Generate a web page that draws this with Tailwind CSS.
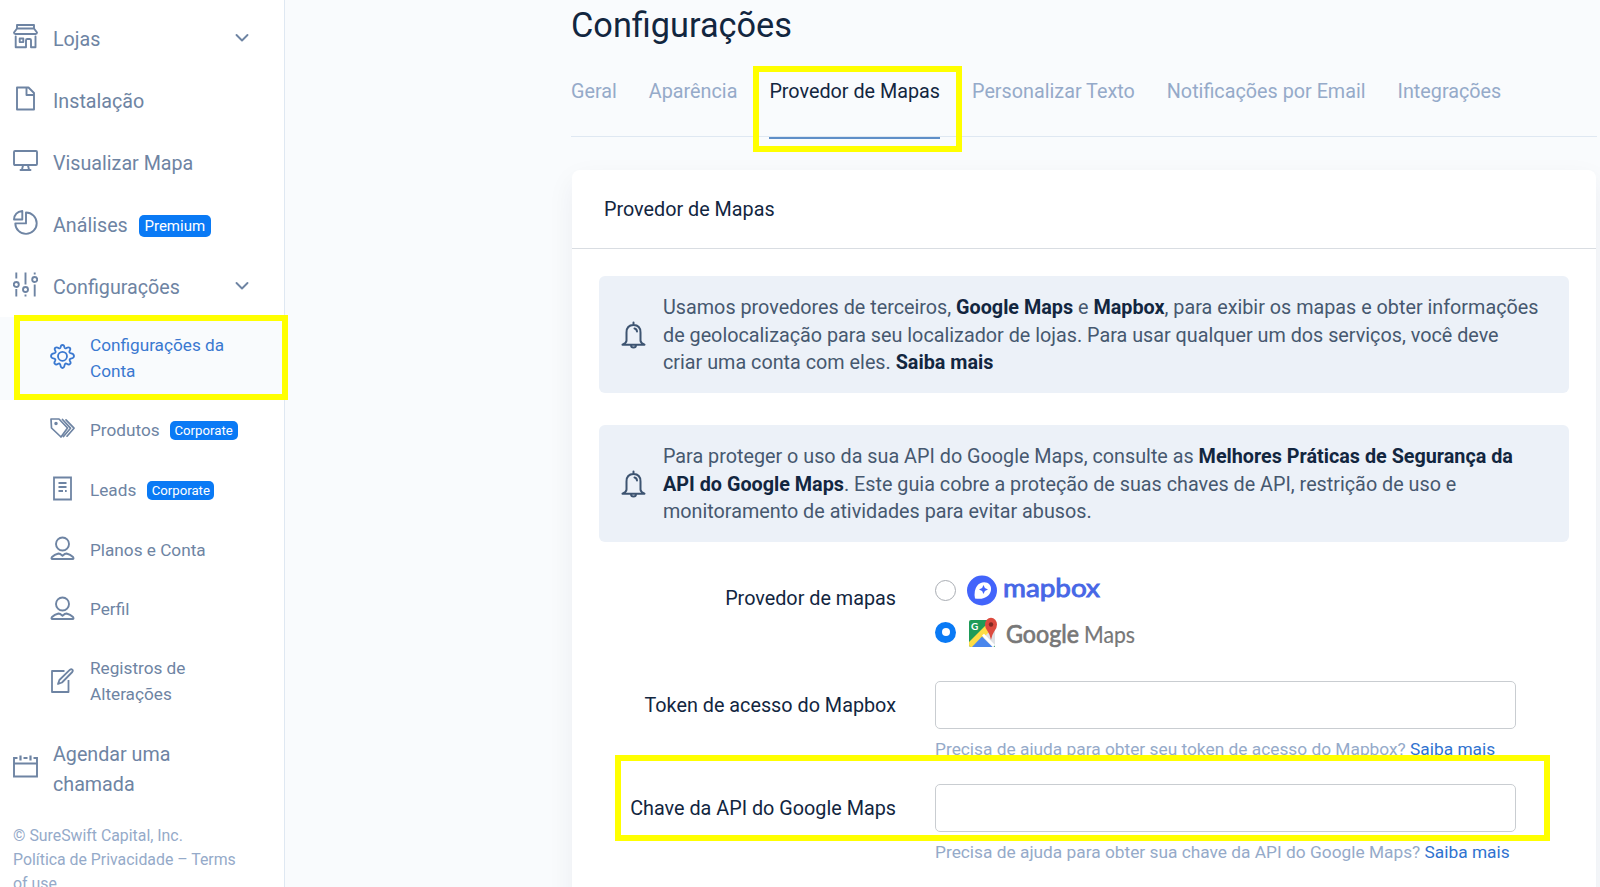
<!DOCTYPE html>
<html lang="pt-BR">
<head>
    <meta charset="UTF-8">
    <meta name="viewport" content="width=device-width, initial-scale=1.0">
    <title>Configurações</title>
    <script src="https://cdn.jsdelivr.net/npm/@tailwindcss/browser@4"></script>
</head>
<body class="relative flex h-screen overflow-hidden bg-[#f9fbfd] font-['Roboto',sans-serif] text-[#12263f]">

    <!-- Sidebar -->
    <aside class="w-[285px] shrink-0 border-r border-[#dfe8f2] bg-white pt-[7.5px] text-[19.7px] leading-[30px] text-[#6e84a3]">
        <nav>
            <a class="flex h-[61.9px] items-center pl-[13px]">
                <svg class="mr-[15px] mb-[4px] size-[25px]" viewBox="0 0 25 25" fill="none" stroke="currentColor" stroke-width="1.9" stroke-linejoin="round" stroke-linecap="round"><path d="M4 1h17v3.5H4zM4 4.500L1 8.500q0 1.500 1.500 1.500h20q1.500 0 1.500-1.500L21 4.500M2.700 12.500v10.700H13v-7q0-1.200 1.200-1.200h2.600q1.200 0 1.200 1.200v7h4.500V12.500M6.700 14.500h3.600v3.600H6.700z"/></svg>
                <span class="pt-[3px]">Lojas</span>
                <svg class="ml-auto mr-[35px] size-[14px]" viewBox="0 0 14 14" fill="none" stroke="currentColor" stroke-width="1.9" stroke-linecap="round" stroke-linejoin="round"><path d="M1.500 4l5.500 5.500L12.500 4"/></svg>
            </a>
            <a class="flex h-[61.9px] items-center pl-[13px]">
                <svg class="mr-[15px] mb-[4px] size-[25px]" viewBox="0 0 25 25" fill="none" stroke="currentColor" stroke-width="1.9" stroke-linejoin="round"><path d="M4 1.500h11.500l5.500 5.500v16.500H4zM13.500 1.500v7.500H21"/></svg>
                <span class="pt-[3px]">Instalação</span>
            </a>
            <a class="flex h-[61.9px] items-center pl-[13px]">
                <svg class="mr-[15px] mb-[4px] size-[25px]" viewBox="0 0 25 25" fill="none" stroke="currentColor" stroke-width="1.9" stroke-linejoin="round" stroke-linecap="round"><path d="M2 3h21q1 0 1 1v12q0 1-1 1H2q-1 0-1-1V4q0-1 1-1zM10 17.500L9 21.500M15 17.500l1 4M7.500 22h10"/></svg>
                <span class="pt-[3px]">Visualizar Mapa</span>
            </a>
            <a class="flex h-[61.9px] items-center pl-[13px]">
                <svg class="mr-[15px] mb-[4px] size-[25px]" viewBox="0 0 25 25" fill="none" stroke="currentColor" stroke-width="1.9" stroke-linejoin="round"><path d="M13 2.500a10.700 10.700 0 1 1-10.700 10.900H13zM9.300 1v8.500H1Q1.500 2 9.300 1z"/></svg>
                <span class="pt-[3px]">Análises</span>
                <span class="mt-[3px] ml-[11px] h-[22px] w-[72px] rounded-[5px] bg-[#0a7af5] text-center text-[15px] leading-[22px] text-white">Premium</span>
            </a>
            <a class="flex h-[61.9px] items-center pl-[13px]">
                <svg class="mr-[15px] mb-[4px] size-[25px]" viewBox="0 0 25 25" fill="none" stroke="currentColor" stroke-width="1.9"><path d="M3.300.5v6M3.300 17v7.500M12.500.5v12M12.500 22.500v2M21.700.5v2M21.700 12.500v12"/><circle cx="3.300" cy="12.500" r="2.500"/><circle cx="12.500" cy="17.500" r="2.500"/><circle cx="21.700" cy="7.500" r="2.500"/></svg>
                <span class="pt-[3px]">Configurações</span>
                <svg class="ml-auto mr-[35px] size-[14px]" viewBox="0 0 14 14" fill="none" stroke="currentColor" stroke-width="1.9" stroke-linecap="round" stroke-linejoin="round"><path d="M1.500 4l5.500 5.500L12.500 4"/></svg>
            </a>

            <!-- Submenu -->
            <div class="flex flex-col gap-[2.400px] text-[17.2px] leading-[25.700px]">
                <a class="flex h-[83px] items-center bg-[#f9fbfd] pl-[50px] text-[#3a78d0]">
                    <svg class="mr-[15px] mb-[4px] size-[25px] shrink-0" viewBox="0 0 25 25" fill="none" stroke="currentColor" stroke-width="1.8" stroke-linejoin="round"><path d="M10.600 3.200q.3-2.200 1.900-2.200t1.900 2.200q.4 1.600 2 .9q2-1.400 3.300-.3t-.1 3.200q-.8 1.400.8 2.100q3.600.7 3.600 2.900t-3.200 2.600q-1.700.6-1 2.100q1.500 2 .3 3.200t-3.300-.2q-1.600-.7-2.100 1q-.4 3.300-2.200 3.300t-2.200-3.300q-.5-1.700-2.100-1q-2.100 1.400-3.300.2t.3-3.200q.7-1.500-1-2.100Q1 14.200 1 12t3.600-2.900q1.600-.7.8-2.100q-1.400-2.100-.1-3.200t3.300.3q1.600.7 2-.9z"/><circle cx="12.500" cy="12.300" r="4.500"/></svg>
                    <span class="w-[150px] pt-px">Configurações da Conta</span>
                </a>
                <a class="flex h-[57.300px] items-center pl-[50px]">
                    <svg class="mr-[15px] mb-[4px] size-[25px]" viewBox="0 0 25 25" fill="none" stroke="currentColor" stroke-width="1.700" stroke-linejoin="round" stroke-linecap="round"><path d="M1 3h8l8.500 9-6.500 9L1.500 12zM12.500 3.500l8 8.700-7 8.300M16 3.800l8 8.400-7 8"/><circle cx="6" cy="7.500" r=".9" fill="currentColor"/></svg>
                    <span>Produtos</span>
                    <span class="ml-[10px] h-[19px] w-[68px] rounded-[5px] bg-[#0a7af5] text-center text-[13.200px] leading-[19px] text-white">Corporate</span>
                </a>
                <a class="flex h-[57.300px] items-center pl-[50px]">
                    <svg class="mr-[15px] mb-[4px] size-[25px]" viewBox="0 0 25 25" fill="none" stroke="currentColor" stroke-width="1.800"><path d="M4 1.500h17v22H4zM8.500 7h8M8.500 11h8M8.500 15h4.500M15 15h1.700"/></svg>
                    <span>Leads</span>
                    <span class="ml-[11px] h-[19px] w-[67px] rounded-[5px] bg-[#0a7af5] text-center text-[13.200px] leading-[19px] text-white">Corporate</span>
                </a>
                <a class="flex h-[57.300px] items-center pl-[50px]">
                    <svg class="mr-[15px] mb-[4px] size-[25px]" viewBox="0 0 25 25" fill="none" stroke="currentColor" stroke-width="1.900" stroke-linejoin="round"><circle cx="12.500" cy="8" r="6.500"/><path d="M8.500 17.500q1.500 0 4 2.200q2.500-2.200 4-2.200q4 1 6.500 3.500q1.300 2-.5 2h-20q-1.800 0-.5-2q2.500-2.500 6.500-3.500z"/></svg>
                    <span>Planos e Conta</span>
                </a>
                <a class="flex h-[57.300px] items-center pl-[50px]">
                    <svg class="mr-[15px] mb-[4px] size-[25px]" viewBox="0 0 25 25" fill="none" stroke="currentColor" stroke-width="1.900" stroke-linejoin="round"><circle cx="12.500" cy="8" r="6.500"/><path d="M8.500 17.500q1.500 0 4 2.200q2.500-2.200 4-2.200q4 1 6.500 3.500q1.300 2-.5 2h-20q-1.800 0-.5-2q2.500-2.500 6.500-3.500z"/></svg>
                    <span>Perfil</span>
                </a>
                <a class="flex h-[83px] items-center pl-[50px]">
                    <svg class="mr-[15px] mb-[4px] size-[25px] shrink-0" viewBox="0 0 25 25" fill="none" stroke="currentColor" stroke-width="1.800" stroke-linejoin="round"><path d="M14.500 3H2v21h16.500V12M20 1.700q1.300-1 2.300 0t0 2.300L12 14.500l-4 1.500 1.400-4z"/></svg>
                    <span class="w-[120px] pb-[2px]">Registros de Alterações</span>
                </a>
            </div>

            <a class="flex h-[91.7px] items-center pl-[13px]">
                <svg class="mr-[15px] mb-[8px] size-[25px] shrink-0" viewBox="0 0 25 25" fill="none" stroke="currentColor" stroke-width="1.900"><path d="M4.500 5H1v18.500h23V5h-3.500M1 10.500h23M10.500 5h4"/><path d="M7.500 2.500v5M17.500 2.500v5" stroke-width="2.200"/></svg>
                <span class="w-[150px]">Agendar uma chamada</span>
            </a>
        </nav>
        <p class="mt-[8px] w-[240px] pl-[13px] text-[15.850px] leading-[24px] text-[#95aac9]">© SureSwift Capital, Inc.<br>Política de Privacidade – Terms of use</p>
    </aside>

    <!-- Content -->
    <main class="ml-[286px] w-[1026px] shrink-0">
        <h1 class="pt-[5px] text-[34.300px] leading-[40px]">Configurações</h1>
        <div class="mt-[30px] flex h-[62px] gap-[32px] border-b border-[#dfe8f2] text-[19.77px] leading-[33px] text-[#95aac9]">
            <a>Geral</a>
            <a>Aparência</a>
            <a class="h-[64px] border-b-2 border-[#5f8fc8] text-[#12263f]">Provedor de Mapas</a>
            <a>Personalizar Texto</a>
            <a>Notificações por Email</a>
            <a>Integrações</a>
        </div>

        <section class="mt-[33px] ml-px h-[740px] w-[1024px] rounded-lg bg-white shadow-[0_10px_28px_rgba(18,38,63,0.06)]">
            <h2 class="h-[79px] border-b border-[#d9dde2] pl-[32px] text-[19.77px] leading-[80px]">Provedor de Mapas</h2>

            <div class="mt-[27px] ml-[27px] flex h-[117px] w-[970px] items-center rounded-md bg-[#ecf1f8] text-[19.77px] leading-[27.700px] text-[#46586f]">
                <svg class="mr-[16px] ml-[22px] h-[28px] w-[26px]" viewBox="0 0 26 28" fill="none" stroke="#3d5471" stroke-width="2" stroke-linecap="round" stroke-linejoin="round"><path d="M12.500 1.500v2.500M5.500 19.500V11.500q0-7.500 7-7.500T19.500 11.500v8q0 2.500 4 4.200h-22Q5.500 22 5.500 19.500zM13.500 7.500q2.300.4 2.500 3M10 24q0 2.500 2.500 2.500T15 24"/></svg>
                <p class="pt-[2px]">Usamos provedores de terceiros, <b class="text-[#12263f]">Google Maps</b> e <b class="text-[#12263f]">Mapbox</b>, para exibir os mapas e obter informações<br>de geolocalização para seu localizador de lojas. Para usar qualquer um dos serviços, você deve<br>criar uma conta com eles. <b class="text-[#12263f]">Saiba mais</b></p>
            </div>

            <div class="mt-[32px] ml-[27px] flex h-[117px] w-[970px] items-center rounded-md bg-[#ecf1f8] text-[19.77px] leading-[27.700px] text-[#46586f]">
                <svg class="mr-[16px] ml-[22px] h-[28px] w-[26px]" viewBox="0 0 26 28" fill="none" stroke="#3d5471" stroke-width="2" stroke-linecap="round" stroke-linejoin="round"><path d="M12.500 1.500v2.500M5.500 19.500V11.500q0-7.500 7-7.500T19.500 11.500v8q0 2.500 4 4.200h-22Q5.500 22 5.500 19.500zM13.500 7.500q2.300.4 2.500 3M10 24q0 2.500 2.500 2.500T15 24"/></svg>
                <p class="pt-[2px]">Para proteger o uso da sua API do Google Maps, consulte as <b class="text-[#12263f]">Melhores Práticas de Segurança da</b><br><b class="text-[#12263f]">API do Google Maps</b>. Este guia cobre a proteção de suas chaves de API, restrição de uso e<br>monitoramento de atividades para evitar abusos.</p>
            </div>

            <!-- Provider form -->
            <form class="mt-[27px] grid grid-cols-[324px_581px] gap-x-[39px] text-[19.800px]">
                <label class="pt-[15px] text-right leading-[30px]">Provedor de mapas</label>
                <div class="h-[112px]">
                    <div class="flex h-[42px] items-center">
                        <span class="size-[21px] rounded-full border-[1.500px] border-[#a9adb3] bg-white"></span>
                        <svg class="ml-[10px] h-[34px] w-[150px] overflow-visible" viewBox="0 0 150 34"><circle cx="16" cy="17.500" r="15" fill="#4264fb"/><path d="M9 25.500q-1.500-8 2-12.500c3.500-5 10-4.500 12.500-1.500s2 8-1.500 11.200Q17.500 26.800 9 25.500z" fill="#fff"/><path d="M17.500 12l1.400 3.100 3.100 1.400-3.100 1.400-1.400 3.100-1.400-3.100-3.100-1.400 3.100-1.400z" fill="#4264fb"/><text x="37" y="24" font-family="Lato" font-weight="400" font-size="25" textLength="97" lengthAdjust="spacingAndGlyphs" fill="#4767e6" stroke="#4767e6" stroke-width=".9">mapbox</text></svg>
                    </div>
                    <div class="flex h-[42px] items-center">
                        <span class="flex size-[21px] items-center justify-center rounded-full bg-[#0a7af5]"><i class="size-[8px] rounded-full bg-white"></i></span>
                        <svg class="ml-[10px] h-[34px] w-[190px] overflow-visible" viewBox="0 0 190 34">
                            <path d="M5 5h24v27H5q-2 0-2-2V7q0-2 2-2z" fill="#1e9b58"/>
                            <path d="M29 12v18q0 2-2 2h-3L15 22z" fill="#dfe1e5"/>
                            <path d="M3 27L21 9l5 5L8 32H5q-2 0-2-2z" fill="#fddc45"/>
                            <path d="M6 32l10-10.500L26.500 32z" fill="#4a86ec"/>
                            <path d="M16 20.500l2-1.800L29 30l-2 2z" fill="#fff"/>
                            <path d="M25 25q-.8-5-3.200-8.500-2.800-3-2.800-7a6 6.800 0 0 1 12 0q0 4-2.800 7-2.400 3.500-3.200 8.500z" fill="#dc4a3e"/><circle cx="25" cy="9.500" r="2.200" fill="#7f2a22"/>
                            <text x="5" y="15" font-family="Lato" font-weight="700" font-size="10" fill="#fff">G</text>
                            <text x="40" y="28" font-family="Lato" font-size="25" textLength="73" lengthAdjust="spacingAndGlyphs" fill="#777" stroke="#777" stroke-width=".7">Google</text>
                            <text x="118" y="28" font-family="Lato" font-size="24" textLength="51" lengthAdjust="spacingAndGlyphs" fill="#777" stroke="#777" stroke-width=".2">Maps</text>
                        </svg>
                    </div>
                </div>

                <label class="pt-px text-right leading-[48px]">Token de acesso do Mapbox</label>
                <div class="h-[103px]">
                    <input type="text" class="block h-[48px] w-full rounded-[5px] border border-[#c9cdd1] bg-white">
                    <p class="mt-[8px] text-[17.320px] leading-[25px] text-[#95aac9]">Precisa de ajuda para obter seu token de acesso do Mapbox? <a class="text-[#2f72cf]">Saiba mais</a></p>
                </div>

                <label class="pt-px text-right leading-[48px]">Chave da API do Google Maps</label>
                <div class="h-[103px]">
                    <input type="text" class="block h-[48px] w-full rounded-[5px] border border-[#c9cdd1] bg-white">
                    <p class="mt-[8px] text-[17.320px] leading-[25px] text-[#95aac9]">Precisa de ajuda para obter sua chave da API do Google Maps? <a class="text-[#2f72cf]">Saiba mais</a></p>
                </div>
            </form>
        </section>
    </main>

    <!-- Highlight frames -->
    <div class="absolute top-[315px] left-[14px] h-[85px] w-[274px] border-6 border-[#ffff00]"></div>
    <div class="absolute top-[66px] left-[753px] h-[86px] w-[209px] border-6 border-[#ffff00]"></div>
    <div class="absolute top-[755px] left-[615px] h-[86px] w-[935px] border-6 border-[#ffff00]"></div>
</body>
</html>
